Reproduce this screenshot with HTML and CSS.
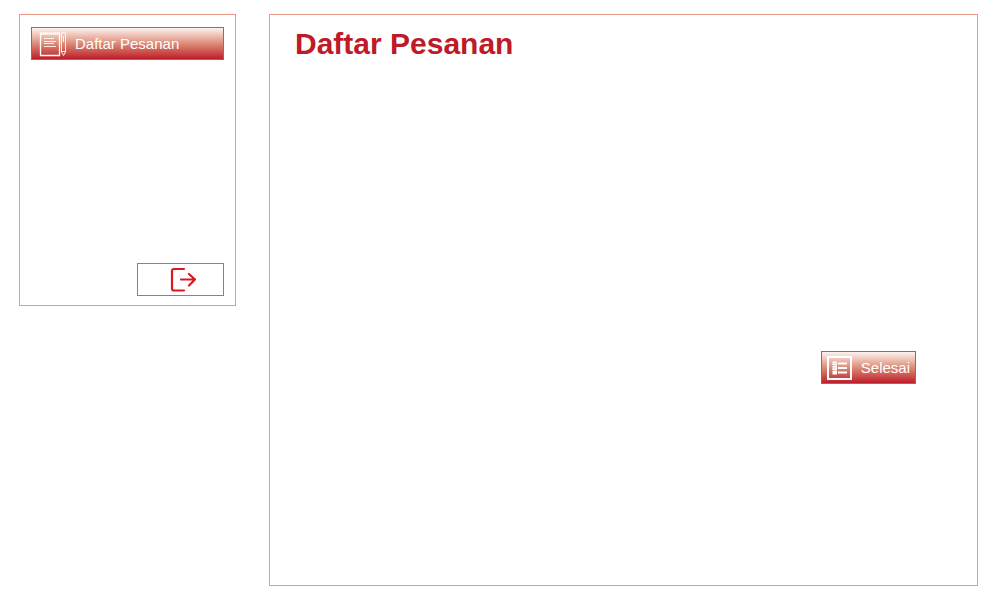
FILE: index.html
```html
<!DOCTYPE html>
<html lang="id">
<head>
<meta charset="utf-8">
<meta name="viewport" content="width=device-width, initial-scale=1">
<title>Daftar Pesanan</title>
<link rel="stylesheet" href="styles.css">
</head>
<body class="page">
  <aside class="sidebar">
    <nav>
      <a class="gradient-box nav-link" href="#pesanan">
        <svg class="icon" viewBox="0 0 28 28" aria-hidden="true" fill="none" stroke="#fff">
          <path d="M1.500 3.500H20.500V25.500H1.500Z" stroke-width="1.300"/>
          <path d="M2 3.500H21" stroke-width="2.500" stroke-dasharray="1 1"/>
          <path d="M5 8.500H15M5 11.500H17M5 13.500H15M5 16.500H17" stroke-width="1" opacity=".85"/>
          <path d="M22.500 4Q22.500 2.500 24.500 2.500T26.500 4V22L24.500 25.500L22.500 22ZM22.500 21.500H26.500M24.500 6V12" stroke-width="1" opacity=".9"/>
        </svg>
        <span>Daftar Pesanan</span>
      </a>
    </nav>
    <button class="logout" type="button" aria-label="Keluar">
      <svg class="icon" viewBox="0 0 28 28" aria-hidden="true" fill="none" stroke="#d71920" stroke-width="2.200" stroke-linecap="round" stroke-linejoin="round">
        <path d="M15 3H5Q3 3 3 5V22.500Q3 24.500 5 24.500H15M12 13.500H26M20 8L26 13.500L20 19.500"/>
      </svg>
    </button>
  </aside>
  <main class="content" id="pesanan">
    <h1 class="title">Daftar Pesanan</h1>
    <button class="gradient-box finish" type="button">
      <svg class="icon" viewBox="0 0 28 28" aria-hidden="true" fill="none" stroke="#fff">
        <path d="M3 3H26V25H3Z" stroke-width="2"/>
        <path d="M7.500 9.500H12M7.500 14H12M7.500 18.500H12" stroke-width="3.800"/>
        <path d="M13 9.500H22M13 14H22M13 18.500H22" stroke-width="2"/>
        <path d="M8.500 9L10 10L11.500 8.500M8.500 13.500L10 14.500L11.500 13" stroke="#dc8977" stroke-width=".5"/>
      </svg>
      <span>Selesai</span>
    </button>
  </main>
</body>
</html>
```
FILE: styles.css
```css
* {
  box-sizing: border-box;
}

.page {
  display: grid;
  grid-template-columns: 217px 1fr;
  gap: 33px;
  align-items: start;
  min-height: 100vh;
  margin: 0;
  padding: 14px 22px 14px 19px;
  background: #fff;
  font-family: "Liberation Sans", Arial, sans-serif;
  font-size: 15px;
}

.sidebar {
  display: flex;
  flex-direction: column;
  justify-content: space-between;
  min-height: 292px;
  padding: 12px 11px 9px;
  border: 1px solid #e89a86;
}

.gradient-box {
  display: flex;
  align-items: center;
  height: 33px;
  border: 1px solid #c9535a;
  background: linear-gradient(#fdf3ef, #dc8c78 50%, #be1e2a);
  color: #fff;
  font: inherit;
  text-decoration: none;
}

.nav-link {
  gap: 8px;
  padding: 0 7px;
}

.icon {
  flex: none;
  width: 28px;
  height: 28px;
}

.logout {
  display: flex;
  align-items: center;
  justify-content: center;
  align-self: flex-end;
  width: 87px;
  height: 33px;
  padding: 0 0 0 4px;
  border: 1px solid #cf6560;
  background: #fff;
}

.content {
  display: flex;
  flex-direction: column;
  justify-content: space-between;
  align-self: stretch;
  padding: 12px 61px 201px 25px;
  border: 1px solid #e89a86;
}

.title {
  margin: 0;
  color: #be1a28;
  font-size: 30px;
  line-height: 34px;
}

.finish {
  align-self: flex-end;
  gap: 8px;
  padding: 0 5px 0 3px;
}
```
